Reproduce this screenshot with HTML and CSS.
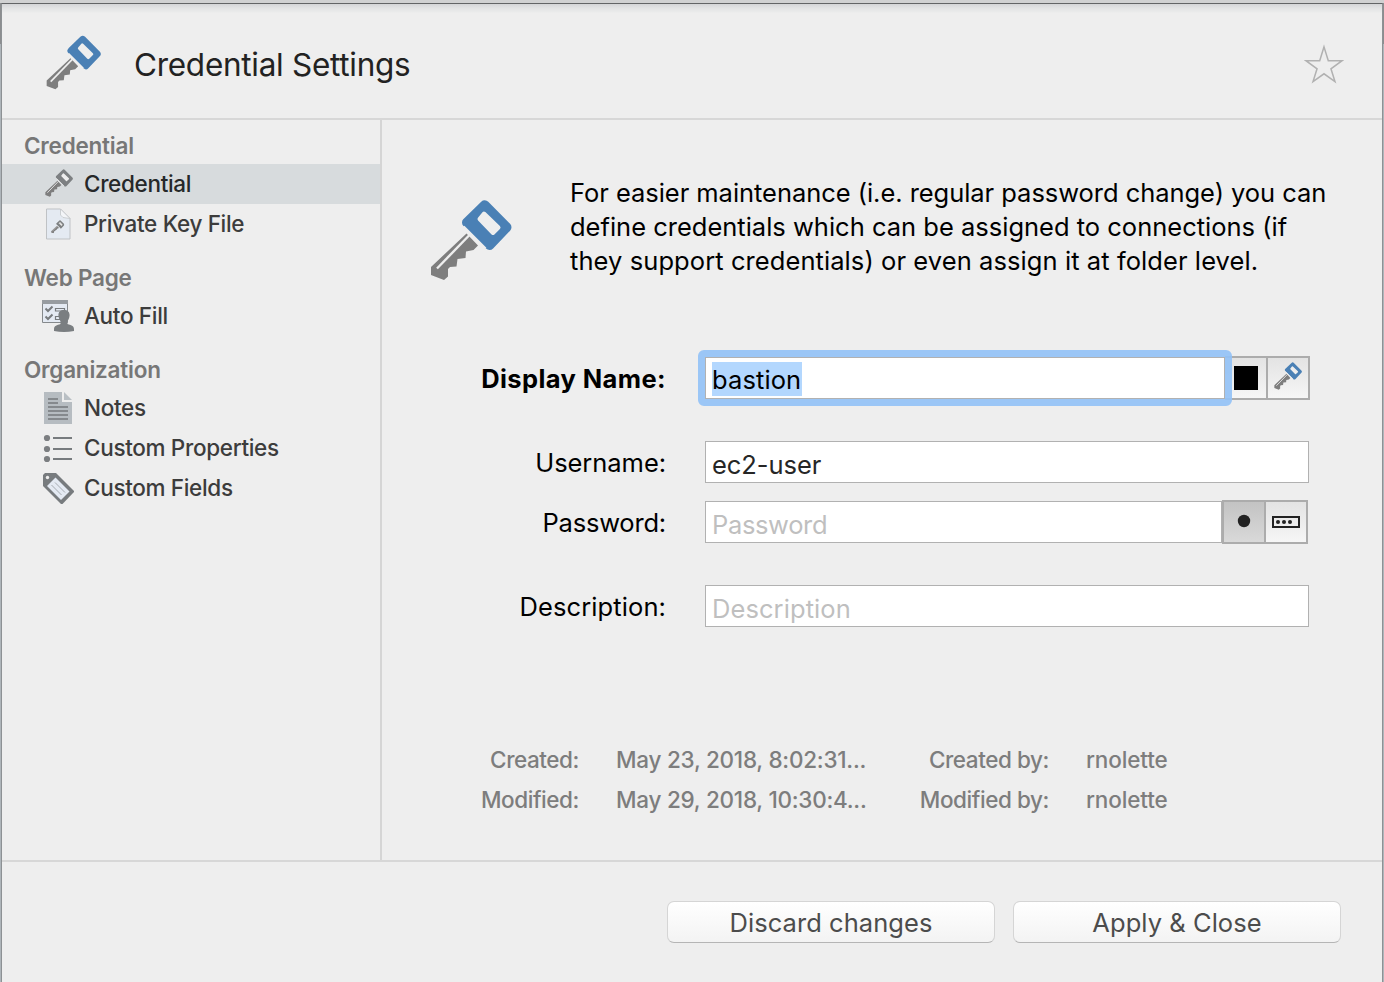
FILE: index.html
```html
<!DOCTYPE html>
<html lang="en">
<head>
<meta charset="utf-8">
<title>Credential Settings</title>
<link rel="stylesheet" href="styles.css">
</head>
<body>
<svg class="symbols" width="0" height="0">
  <symbol id="key" viewBox="0 0 82 82">
    <path fill="currentColor" stroke="currentColor" stroke-width="10" stroke-linejoin="round" d="M54.700 6.300 76.500 28.300 59.500 46 37 23.500Z"/>
    <path class="key-hole" stroke-width="4" stroke-linejoin="round" d="M54 14.500 68.500 28.500 63 34 49.500 20Z"/>
    <path class="key-shaft" d="M36.500 34.500 48 46.500 43.500 51 36 52.500 35.500 59 27.500 60 26.500 67.500 20 68 18 70 18 77.500 14 81 1 76V68Z"/>
    <path class="key-groove" stroke-width="2.400" d="M39.500 36 7 69.500"/>
    <path class="key-groove" stroke-width="2.400" d="M33.500 27.500 55.500 49.500"/>
  </symbol>
</svg>
<div class="window">
  <header class="header">
    <svg class="header-key key-blue"><use href="#key"/></svg>
    <h1 class="title">Credential Settings</h1>
    <svg class="star" viewBox="0 0 42 42"><path d="M21 3 25.500 17.500H40L28.300 26 32.500 39.500 21 31.300 9.500 39.500 13.700 26 2 17.500H16.500Z"/></svg>
  </header>
  <div class="body">
    <nav class="sidebar">
      <h2 class="group">Credential</h2>
      <a class="item selected"><span class="icon"><svg class="nav-key key-gray"><use href="#key"/></svg></span><span>Credential</span></a>
      <a class="item"><span class="icon"><svg width="32" height="32" viewBox="0 0 32 32">
        <path d="M4.500 1H18.500L28 10.500V31H4.500Z" fill="#e4eaf2" stroke="#bfc2c5"/>
        <path d="M18.500 1V7L21 9.500 28 10.500Z" fill="#f3f5f8" stroke="#c3c6c9" stroke-width=".8"/>
        <svg class="key-gray" x="9" y="12" width="13.500" height="13.500"><use href="#key"/></svg></svg></span><span>Private Key File</span></a>
      <h2 class="group">Web Page</h2>
      <a class="item"><span class="icon"><svg width="32" height="32" viewBox="0 0 32 32">
        <path d="M.5 2V22.500H25.500V2Z" fill="#e4eaf3" stroke="#85898c"/>
        <path d="M0 0H26V4H0Z" fill="#979ca1"/>
        <path d="M3.500 8.500 6 11 10.500 6.500M3.500 16.500 6 19 10.500 14.500" fill="none" stroke="#777b7e" stroke-width="2"/>
        <path d="M13.500 8.500H22.500V11H13.500ZM22 16.500H13.500V19.500H22" fill="none" stroke="#777b7e" stroke-width="1.200"/>
        <path d="M22 10C26 10 28 12.500 27.500 16 27.300 18.500 26 20 25.500 21.500V24C29 25.500 32 25 32 29.500V31Q22 33 12 31V29.500C12 25 15 25.500 18.500 24V21.500C18 20 16.700 18.500 16.500 16 16 12.500 18 10 22 10Z" fill="#7a7e81"/></svg></span><span>Auto Fill</span></a>
      <h2 class="group">Organization</h2>
      <a class="item"><span class="icon"><svg width="32" height="32" viewBox="0 0 32 32">
        <path d="M2 0H20V10H30V32H2Z" fill="#b6bcc1"/><path d="M22 0 30 8H22Z" fill="#b9bfc4"/>
        <path d="M6 7H16M6 11H16M6 15H26M6 19H26M6 23H26M6 27H26" stroke="#85898d" stroke-width="2"/></svg></span><span>Notes</span></a>
      <a class="item"><span class="icon"><svg width="32" height="32" viewBox="0 0 32 32">
        <g fill="#7b7e81"><circle cx="5" cy="6" r="3.100"/><circle cx="5" cy="17" r="3.100"/><circle cx="5" cy="27" r="3.100"/></g>
        <path d="M11 6H30M11 17H30M11 27H30" stroke="#777b7e" stroke-width="2"/></svg></span><span>Custom Properties</span></a>
      <a class="item"><span class="icon"><svg width="32" height="32" viewBox="0 0 32 32">
        <path d="M3 1H14L32 19V20L20.500 32H19L1 14V3Z" fill="#777b7e"/>
        <path d="M13.500 5.500 27.500 19.500 19 28 5 14Z" fill="#e4eaf3"/>
        <circle cx="5.500" cy="5.500" r="1.700" fill="#eee"/>
        <path d="M13 10.500 23 20.500M9.500 13 19.500 23" stroke="#a6abb1" stroke-width="1"/></svg></span><span>Custom Fields</span></a>
    </nav>
    <main class="main">
      <section class="intro">
        <svg class="intro-key key-blue"><use href="#key"/></svg>
        <p class="intro-text"><span class="line1">For easier maintenance (i.e. regular password change) you can</span><br><span class="line2">define credentials which can be assigned to connections (if</span><br><span class="line3">they support credentials) or even assign it at folder level.</span></p>
      </section>
      <form class="form">
        <label class="label bold">Display Name:</label>
        <div class="field name-row">
          <div class="box focused"><span class="value highlight">bastion</span></div>
          <span class="tool name-tool"><span class="swatch"></span></span>
          <span class="tool name-tool last"><svg class="tool-key key-blue"><use href="#key"/></svg></span>
        </div>
        <label class="label">Username:</label>
        <div class="field"><div class="box"><span class="value">ec2-user</span></div></div>
        <label class="label pass-label">Password:</label>
        <div class="field pass-row">
          <div class="box"><span class="value hint pass-hint">Password</span></div>
          <span class="tool pressed"><svg width="14" height="14"><circle cx="7" cy="7" r="6.200" fill="#222"/></svg></span>
          <span class="tool last"><svg width="28" height="12" viewBox="0 0 28 12"><path d="M1 1H27V11H1Z" fill="none" stroke="#222" stroke-width="2"/><g fill="#222"><circle cx="6" cy="6" r="2"/><circle cx="12" cy="6" r="2"/><circle cx="18" cy="6" r="2"/></g></svg></span>
        </div>
        <label class="label desc-label">Description:</label>
        <div class="field"><div class="box"><span class="value hint desc-hint">Description</span></div></div>
      </form>
      <dl class="meta">
        <dt>Created:</dt><dd>May 23, 2018, 8:02:31...</dd><dt>Created by:</dt><dd class="author">rnolette</dd>
        <dt>Modified:</dt><dd>May 29, 2018, 10:30:4...</dd><dt>Modified by:</dt><dd class="author">rnolette</dd>
      </dl>
    </main>
  </div>
  <footer class="footer">
    <button class="button">Discard changes</button>
    <button class="button">Apply &amp; Close</button>
  </footer>
</div>
</body>
</html>
```
FILE: styles.css
```css
* { box-sizing: border-box; }
body {
  margin: 0;
  width: 1384px;
  height: 982px;
  overflow: hidden;
  padding: 3px 1px 0;
  background: linear-gradient(#d0d1d2 0 3px, #8b8d8f 3px 44px, #aeb5ba 44px);
  font-family: Inter, "Liberation Sans", sans-serif;
  font-weight: 400;
}
.symbols { position: absolute; }
.window {
  display: flex;
  flex-direction: column;
  height: 979px;
  border: 1px solid #8d9194;
  border-top-color: #626466;
  border-bottom: 0;
  background: linear-gradient(#d4d5d7, #e2e3e4 4px, #eaebeb 8px, #eee 9px);
}
.key-blue { color: #4a80b5; }
.key-gray { color: #7d8082; }
.key-shaft { fill: #7e7e7e; }
.key-hole { fill: #eee; stroke: #eee; }
.key-groove { stroke: #eee; }

.header {
  display: flex;
  align-items: center;
  height: 116px;
  padding: 0 38px 0 44px;
  border-bottom: 2px solid #d7d7d7;
}
.header-key { width: 55px; height: 55px; margin-top: 2px; }
.title {
  flex: 1;
  margin: 7px 0 0 33px;
  font-size: 31.500px;
  font-weight: 400;
  line-height: 40px;
  letter-spacing: -0.280px;
  color: #222;
}
.star { width: 40px; height: 40px; margin-top: 5px; fill: none; stroke: #b1b1b1; stroke-width: 1.600; }

.body { display: flex; height: 742px; border-bottom: 2px solid #d7d7d7; }
.sidebar { width: 380px; padding-top: 8px; border-right: 2px solid #d5d5d5; font-weight: 500; }
.group {
  height: 36px;
  margin: 0;
  padding-left: 22px;
  font-size: 22.500px;
  font-weight: 600;
  line-height: 36px;
  letter-spacing: -0.220px;
  color: #777;
}
.item + .group { height: 52px; padding-top: 16px; }
.item {
  display: flex;
  align-items: center;
  height: 40px;
  padding-left: 40px;
  font-size: 22.500px;
  letter-spacing: -0.330px;
  color: #3c3c3c;
}
.item > span:last-child { margin-bottom: 1px; }
.selected { background: #d7dbdd; color: #262829; }
.selected .key-hole { fill: #d7dbdd; stroke: #d7dbdd; }
.selected .key-groove { stroke: #d7dbdd; }
.icon { display: flex; width: 32px; height: 32px; margin-right: 10px; align-items: center; justify-content: center; }
.nav-key { width: 28px; height: 28px; margin: 0 0 2px 1px; }

.main { flex: 1; }
.intro { display: flex; padding: 56px 0 0 48px; }
.intro-key { width: 82px; height: 82px; margin-top: 23px; }
.intro-text { margin: 0 0 0 58px; font-size: 25.500px; line-height: 34px; white-space: nowrap; color: #000; }
.line1 { letter-spacing: -0.045px; }
.line2 { letter-spacing: 0; }
.line3 { letter-spacing: 0.080px; }

.form {
  display: grid;
  grid-template-columns: 284px 605px;
  grid-template-rows: 85px 60px 84px 44px;
  column-gap: 39px;
  margin-top: 75px;
}
.label { justify-self: end; font-size: 25.500px; line-height: 44px; letter-spacing: -0.050px; color: #000; white-space: nowrap; }
.bold { font-weight: 700; letter-spacing: 0.400px; padding-top: 1px; }
.pass-label { letter-spacing: -0.200px; }
.desc-label { letter-spacing: 0.100px; }
.field { display: flex; align-items: flex-start; }
.box {
  flex: 1;
  display: flex;
  align-items: center;
  height: 42px;
  margin-right: 1px;
  padding: 5px 6px 0;
  border: 1px solid #b1b1b1;
  background: #fff;
  font-size: 25.500px;
  letter-spacing: -0.050px;
  color: #262626;
}
.focused { position: relative; z-index: 1; margin: 1px 0 0; }
.focused::after {
  content: "";
  position: absolute;
  inset: -8px;
  border: 7px solid #92c1f6e8;
  border-radius: 6px;
}
.value { line-height: 34px; }
.highlight { padding: 2px 1px 0 0; margin-bottom: 3px; line-height: 32px; letter-spacing: 0.100px; background: #b3d7fe; color: #000; }
.hint { color: #bfbfbf; }
.pass-hint { letter-spacing: -0.350px; }
.desc-hint { letter-spacing: 0.080px; }
.tool {
  display: flex;
  align-items: center;
  justify-content: center;
  width: 42px;
  height: 44px;
  border: 2px solid #acacac;
  border-right: 0;
  background: linear-gradient(#e3e3e3, #f6f6f6);
}
.last { width: 44px; border-right: 2px solid #acacac; }
.name-tool:not(.last) { width: 41px; border-left: 0; }
.swatch { width: 24px; height: 24px; background: #000; }
.tool-key { width: 28px; height: 28px; margin: 0 0 5px 0; }
.pass-row { padding-right: 2px; }
.pass-row .box { margin: 0; }
.pass-row .tool { margin-top: -1px; }
.pressed { background: linear-gradient(#c3c3c3, #d9d9d9); }
.pressed svg { margin-bottom: 2px; }

.meta {
  display: grid;
  grid-template-columns: 197px 251px 219px 120px;
  grid-auto-rows: 40px;
  margin: 111px 0 0;
  font-size: 22.500px;
  font-weight: 500;
  line-height: 40px;
  color: #7d7d7d;
  white-space: nowrap;
}
.meta dt { justify-self: end; letter-spacing: -0.430px; }
.meta dd { margin: 0 0 0 37px; letter-spacing: -0.250px; }
.meta .author { letter-spacing: -0.150px; }

.footer { display: flex; justify-content: flex-end; gap: 18px; padding: 39px 41px 0 0; }
.button {
  width: 328px;
  height: 42px;
  padding: 1px 0 0;
  border: 1px solid #d5d5d5;
  border-bottom-color: #b5b5b5;
  border-radius: 7px;
  background: linear-gradient(#fff, #f3f3f3);
  font-family: inherit;
  font-size: 25.500px;
  font-weight: 400;
  letter-spacing: 0.050px;
  color: #4c4c4c;
}
```
